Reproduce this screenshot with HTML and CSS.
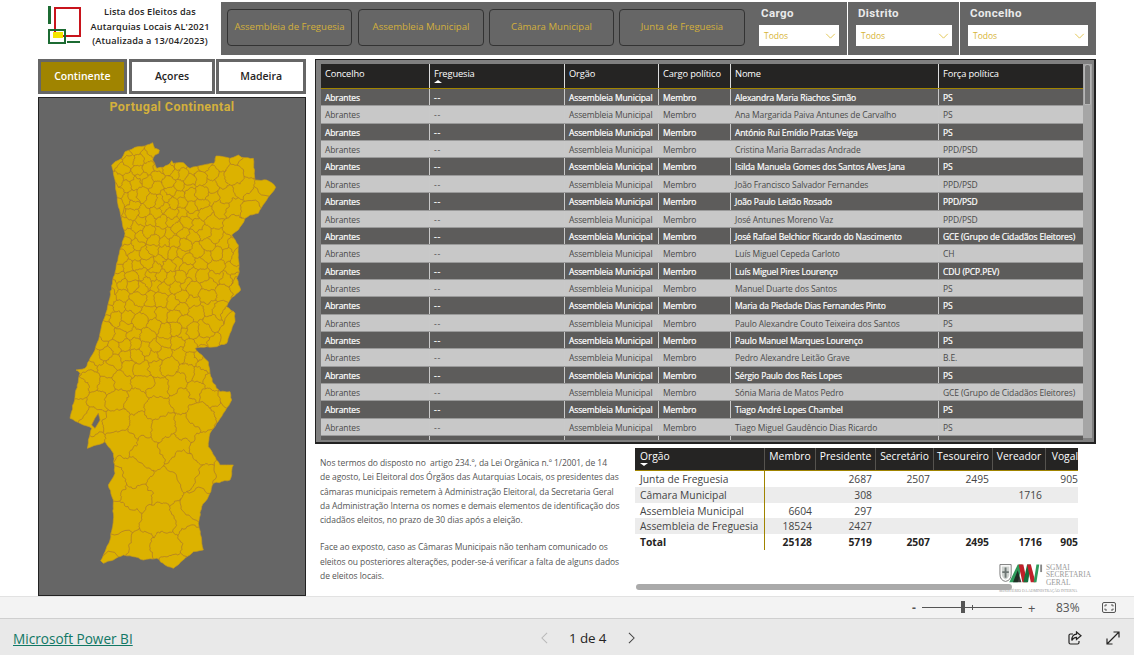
FILE: index.html
```html
<!DOCTYPE html>
<html lang="pt">
<head>
<meta charset="utf-8">
<title>Lista dos Eleitos das Autarquias Locais</title>
<link rel="stylesheet" href="styles.css">
</head>
<body>
<div class="report">
  <header class="top">
    <div class="brand">
      <svg class="brand-logo" viewBox="0 0 34 39" width="34" height="39">
        <rect x="8" y="3" width="25" height="28" fill="#fff" stroke="#c8141c" stroke-width="2"/>
        <rect x="6" y="27" width="10" height="6" fill="#f5e600"/>
        <rect x="1" y="1" width="3" height="18" fill="#1c6b32"/>
        <rect x="2" y="25" width="16" height="13" fill="none" stroke="#1c6b32" stroke-width="2"/>
        <rect x="20" y="36" width="13" height="2" fill="#1c6b32"/>
      </svg>
      <div class="brand-title">Lista dos Eleitos das<br>Autarquias Locais AL'2021<br>(Atualizada a 13/04/2023)</div>
    </div>
    <div class="top-panel buttons-panel">
      <div class="org-btn">Assembleia de Freguesia</div>
      <div class="org-btn">Assembleia Municipal</div>
      <div class="org-btn">Câmara Municipal</div>
      <div class="org-btn">Junta de Freguesia</div>
    </div>
    <div class="top-panel slicer slicer-cargo">
      <div class="slicer-label">Cargo</div>
      <div class="slicer-box"><span>Todos</span><svg viewBox="0 0 12 7" width="11" height="6"><path d="M1 1l5 5 5-5" class="chev"/></svg></div>
    </div>
    <div class="top-panel slicer slicer-distrito">
      <div class="slicer-label">Distrito</div>
      <div class="slicer-box"><span>Todos</span><svg viewBox="0 0 12 7" width="11" height="6"><path d="M1 1l5 5 5-5" class="chev"/></svg></div>
    </div>
    <div class="top-panel slicer slicer-concelho">
      <div class="slicer-label">Concelho</div>
      <div class="slicer-box"><span>Todos</span><svg viewBox="0 0 12 7" width="11" height="6"><path d="M1 1l5 5 5-5" class="chev"/></svg></div>
    </div>
  </header>

  <main class="main">
    <section class="left">
      <div class="tabs">
        <div class="tab tab-a active">Continente</div>
        <div class="tab tab-b">Açores</div>
        <div class="tab tab-a">Madeira</div>
      </div>
      <div class="map-panel">
        <div class="map-title">Portugal Continental</div>
        <svg class="map" id="map" viewBox="0 0 690 1350" width="230" height="450">
          <defs><clipPath id="pt-clip"><polygon id="pt-clip-shape" points=""/></clipPath></defs>
          <polygon id="pt-shape" class="map-land" data-points="155,105 165,95 185,85 195,65 215,58 225,52 255,48 278,38 284,55 298,60 296,70 285,75 278,90 290,115 310,112 330,100 335,92 340,100 370,98 390,115 420,107 430,105 462,100 468,78 490,80 510,85 520,82 535,75 545,82 580,85 585,150 620,150 635,158 647,172 635,190 620,210 605,232 595,250 570,255 555,265 545,285 535,300 515,315 535,345 535,375 538,425 530,445 542,480 510,510 500,530 525,550 525,575 510,610 500,640 470,650 440,650 405,655 445,695 450,730 460,760 480,785 510,785 515,810 490,850 470,880 450,910 445,950 480,1005 520,1005 510,1050 460,1060 445,1100 425,1130 415,1180 425,1230 430,1260 400,1265 370,1290 340,1315 315,1305 290,1285 250,1290 220,1280 190,1275 160,1290 130,1300 122,1292 135,1265 150,1230 160,1170 160,1110 145,1065 165,1030 160,970 135,935 110,945 82,955 85,930 95,895 70,885 30,865 45,800 60,730 48,720 75,715 105,660 120,610 145,520 170,400 195,310 175,230 165,150"/>
          <g id="pt-lines" clip-path="url(#pt-clip)"></g>
          <polygon class="map-water" points="115,850 120,870 105,895 95,885 105,865"/>
        </svg>
      </div>
    </section>

    <section class="right">
      <div class="table-panel">
        <div class="row head">
          <span>Concelho</span>
          <span>Freguesia<i class="sort-up"></i></span>
          <span>Orgão</span>
          <span>Cargo político</span>
          <span>Nome</span>
          <span>Força política</span>
        </div>
        <div class="tbody">
          <div class="row"><span>Abrantes</span><span>--</span><span>Assembleia Municipal</span><span>Membro</span><span>Alexandra Maria Riachos Simão</span><span>PS</span></div>
          <div class="row"><span>Abrantes</span><span>--</span><span>Assembleia Municipal</span><span>Membro</span><span>Ana Margarida Paiva Antunes de Carvalho</span><span>PS</span></div>
          <div class="row"><span>Abrantes</span><span>--</span><span>Assembleia Municipal</span><span>Membro</span><span>António Rui Emídio Pratas Veiga</span><span>PS</span></div>
          <div class="row"><span>Abrantes</span><span>--</span><span>Assembleia Municipal</span><span>Membro</span><span>Cristina Maria Barradas Andrade</span><span>PPD/PSD</span></div>
          <div class="row"><span>Abrantes</span><span>--</span><span>Assembleia Municipal</span><span>Membro</span><span>Isilda Manuela Gomes dos Santos Alves Jana</span><span>PS</span></div>
          <div class="row"><span>Abrantes</span><span>--</span><span>Assembleia Municipal</span><span>Membro</span><span>João Francisco Salvador Fernandes</span><span>PPD/PSD</span></div>
          <div class="row"><span>Abrantes</span><span>--</span><span>Assembleia Municipal</span><span>Membro</span><span>João Paulo Leitão Rosado</span><span>PPD/PSD</span></div>
          <div class="row"><span>Abrantes</span><span>--</span><span>Assembleia Municipal</span><span>Membro</span><span>José Antunes Moreno Vaz</span><span>PPD/PSD</span></div>
          <div class="row"><span>Abrantes</span><span>--</span><span>Assembleia Municipal</span><span>Membro</span><span>José Rafael Belchior Ricardo do Nascimento</span><span>GCE (Grupo de Cidadãos Eleitores)</span></div>
          <div class="row"><span>Abrantes</span><span>--</span><span>Assembleia Municipal</span><span>Membro</span><span>Luís Miguel Cepeda Carloto</span><span>CH</span></div>
          <div class="row"><span>Abrantes</span><span>--</span><span>Assembleia Municipal</span><span>Membro</span><span>Luís Miguel Pires Lourenço</span><span>CDU (PCP.PEV)</span></div>
          <div class="row"><span>Abrantes</span><span>--</span><span>Assembleia Municipal</span><span>Membro</span><span>Manuel Duarte dos Santos</span><span>PS</span></div>
          <div class="row"><span>Abrantes</span><span>--</span><span>Assembleia Municipal</span><span>Membro</span><span>Maria da Piedade Dias Fernandes Pinto</span><span>PS</span></div>
          <div class="row"><span>Abrantes</span><span>--</span><span>Assembleia Municipal</span><span>Membro</span><span>Paulo Alexandre Couto Teixeira dos Santos</span><span>PS</span></div>
          <div class="row"><span>Abrantes</span><span>--</span><span>Assembleia Municipal</span><span>Membro</span><span>Paulo Manuel Marques Lourenço</span><span>PS</span></div>
          <div class="row"><span>Abrantes</span><span>--</span><span>Assembleia Municipal</span><span>Membro</span><span>Pedro Alexandre Leitão Grave</span><span>B.E.</span></div>
          <div class="row"><span>Abrantes</span><span>--</span><span>Assembleia Municipal</span><span>Membro</span><span>Sérgio Paulo dos Reis Lopes</span><span>PS</span></div>
          <div class="row"><span>Abrantes</span><span>--</span><span>Assembleia Municipal</span><span>Membro</span><span>Sónia Maria de Matos Pedro</span><span>GCE (Grupo de Cidadãos Eleitores)</span></div>
          <div class="row"><span>Abrantes</span><span>--</span><span>Assembleia Municipal</span><span>Membro</span><span>Tiago André Lopes Chambel</span><span>PS</span></div>
          <div class="row"><span>Abrantes</span><span>--</span><span>Assembleia Municipal</span><span>Membro</span><span>Tiago Miguel Gaudêncio Dias Ricardo</span><span>PS</span></div>
          <div class="row"><span></span><span></span><span></span><span></span><span></span><span></span></div>
        </div>
        <div class="vscroll"><div class="vthumb"></div></div>
      </div>

      <div class="lower">
        <div class="note">
          <p>Nos termos do disposto no&nbsp; artigo 234.º, da Lei Orgânica n.º 1/2001, de 14<br>de agosto, Lei Eleitoral dos Órgãos das Autarquias Locais, os presidentes das<br>câmaras municipais remetem à Administração Eleitoral, da Secretaria Geral<br>da Administração Interna os nomes e demais elementos de identificação dos<br>cidadãos eleitos, no prazo de 30 dias após a eleição.</p>
          <p>Face ao exposto, caso as Câmaras Municipais não tenham comunicado os<br>eleitos ou posteriores alterações, poder-se-á verificar a falta de alguns dados<br>de eleitos locais.</p>
        </div>
        <div class="matrix-wrap">
          <div class="matrix">
            <div class="mrow mhead"><span>Orgão<i class="sort-down"></i></span><span>Membro</span><span>Presidente</span><span>Secretário</span><span>Tesoureiro</span><span>Vereador</span><span>Vogal</span></div>
            <div class="mrow"><span>Junta de Freguesia</span><span></span><span>2687</span><span>2507</span><span>2495</span><span></span><span>905</span></div>
            <div class="mrow alt"><span>Câmara Municipal</span><span></span><span>308</span><span></span><span></span><span>1716</span><span></span></div>
            <div class="mrow"><span>Assembleia Municipal</span><span>6604</span><span>297</span><span></span><span></span><span></span><span></span></div>
            <div class="mrow alt"><span>Assembleia de Freguesia</span><span>18524</span><span>2427</span><span></span><span></span><span></span><span></span></div>
            <div class="mrow total"><span>Total</span><span>25128</span><span>5719</span><span>2507</span><span>2495</span><span>1716</span><span>905</span></div>
          </div>
          <div class="sg-logo">
            <div class="sg-top">
              <svg viewBox="0 0 47 20" width="47" height="20">
                <path d="M1 1h12v10q0 7-6 8Q1 18 1 11z" fill="#fff" stroke="#777" stroke-width="1"/>
                <path d="M3 3h8v8q0 4-4 6Q3 15 3 11z" fill="#cfd3d0"/>
                <path d="M6 4h2v11H6zM3.500 8h7v2h-7z" fill="#6f7775"/>
                <path d="M11 20L20 1h5l-5 19z" fill="#2e9a5b"/>
                <path d="M15 20L20 7l4 13z" fill="#1b1b1b" opacity=".85"/>
                <path d="M21 1h5l4 19h-5z" fill="#c0202a"/>
                <path d="M26 20L30 1h4l-3 19z" fill="#14713d"/>
                <path d="M30 1h4l5 19h-5z" fill="#c0202a"/>
                <path d="M37 20l3-19h3l-3 19z" fill="#2e9a5b"/>
                <path d="M44 1h2v8h-2z" fill="#888"/>
              </svg>
              <div class="sg-name">SGMAI<br>SECRETARIA<br>GERAL</div>
            </div>
            <div class="sg-min">MINISTÉRIO DA ADMINISTRAÇÃO INTERNA</div>
          </div>
          <div class="hscroll"></div>
        </div>
      </div>
    </section>
  </main>
</div>

<div class="zoombar">
  <span class="zoom-minus">-</span>
  <div class="zoom-slider"><i class="zoom-tick"></i><i class="zoom-handle"></i></div>
  <span class="zoom-plus">+</span>
  <span class="zoom-value">83%</span>
  <svg class="zoom-fit" viewBox="0 0 14 11" width="14" height="11"><rect x=".5" y=".5" width="13" height="10" rx="1.500" class="icon-thin"/><path d="M3 4.500V3h2M9 3h2v1.500M11 6.500V8H9M5 8H3V6.500" class="icon-thin"/></svg>
</div>

<footer class="footer">
  <a class="pbi-link" href="#">Microsoft Power BI</a>
  <nav class="pager">
    <svg viewBox="0 0 8 14" width="7" height="12"><path d="M7 1L1 7l6 6" class="pager-off"/></svg>
    <span class="pager-text">1 de 4</span>
    <svg viewBox="0 0 8 14" width="7" height="12"><path d="M1 1l6 6-6 6" class="pager-on"/></svg>
  </nav>
  <div class="foot-icons">
    <svg viewBox="0 0 14 14" width="14" height="14"><path d="M5 3H2.500A1.500 1.500 0 0 0 1 4.500v7A1.500 1.500 0 0 0 2.500 13h7a1.500 1.500 0 0 0 1.500-1.500V10" class="icon-foot"/><path d="M8.500 1L13 4.800 8.500 8.500V6.300C6.200 6.300 4.700 7.500 3.800 9.500 3.800 6 5.600 3.400 8.500 3.200z" class="icon-foot"/></svg>
    <svg viewBox="0 0 14 14" width="14" height="14"><path d="M1 13L13 1M7.500 1H13v5.500M1 7.500V13h5.500" class="icon-foot"/></svg>
  </div>
</footer>
<script src="map.js"></script>
</body>
</html>
```
FILE: styles.css
```css
* { box-sizing: border-box; }
html, body { margin: 0; padding: 0; }
body {
  width: 1134px;
  height: 655px;
  overflow: hidden;
  background: #fff;
  font-family: "Open Sans", "Noto Sans", sans-serif;
  color: #333;
}
.report { height: 596px; overflow: hidden; }

/* top */
.top { display: flex; height: 59px; padding-top: 2px; }
.brand { width: 221px; display: flex; align-items: flex-start; padding: 3px 0 0 47px; }
.brand-logo { flex: none; }
.brand-title {
  width: 138px;
  text-align: center;
  font-size: 9.2px;
  line-height: 14.5px;
  font-weight: 600;
  color: #252423;
  letter-spacing: .15px;
}
.top-panel { background: #666; height: 53px; }
.buttons-panel { width: 530px; display: flex; gap: 5px; padding: 7px 0 0 6px; }
.org-btn {
  width: 125px;
  height: 37px;
  padding-bottom: 2px;
  border: 1.5px solid #333;
  border-radius: 4px;
  color: #d3b03c;
  font-size: 9.6px;
  display: flex;
  align-items: center;
  justify-content: center;
  white-space: nowrap;
}
.org-btn:first-child { margin-right: 1px; }
.org-btn:nth-child(even) { width: 126px; }
.slicer { margin-right: 1px; padding-top: 4px; }
.slicer-cargo { width: 96px; padding-left: 8px; }
.slicer-distrito { width: 111px; padding-left: 8px; }
.slicer-concelho { width: 136px; margin-right: 0; padding-left: 8px; }
.slicer-label {
  font-family: Roboto, sans-serif;
  font-weight: 700;
  font-size: 11.5px;
  line-height: 14px;
  letter-spacing: .4px;
  color: #eaeaea;
  padding-left: 2px;
}
.slicer-box {
  height: 21px;
  margin-top: 5px;
  background: #fff;
  display: flex;
  align-items: center;
  justify-content: space-between;
  padding: 0 1px 0 5px;
  font-size: 8.5px;
  color: #d7b437;
}
.slicer-box svg { margin-right: 2px; }
.slicer-cargo .slicer-box { width: 80px; }
.slicer-distrito .slicer-box { width: 96px; }
.slicer-concelho .slicer-box { width: 120px; }
.chev { fill: none; stroke: #e0c040; stroke-width: 1; }

/* main */
.main { display: flex; padding-left: 38px; gap: 9px; }
.left { width: 268px; flex: none; }
.right { width: 781px; flex: none; }
.tabs { display: flex; gap: 1px; height: 35px; }
.tab {
  border: 3px solid #666;
  background: #fff;
  display: flex;
  align-items: center;
  justify-content: center;
  padding-bottom: 2px;
  font-size: 10.5px;
  font-weight: 600;
  color: #252423;
}
.tab-a { width: 90px; }
.tab-b { width: 87px; }
.tab-a:first-child { width: 89px; margin-right: 1px; }
.tab.active { background: #a08400; color: #fff; }
.map-panel {
  height: 499px;
  margin-top: 3px;
  background: #666;
  border: 1px solid #222;
  padding-left: 21px;
}
.map-title {
  margin-left: -21px;
  height: 18px;
  text-align: center;
  font-family: Roboto, sans-serif;
  font-weight: 700;
  font-size: 12.5px;
  line-height: 17px;
  letter-spacing: .45px;
  color: #d3b03c;
}
.map { display: block; margin-top: 14px; }
.map-land { fill: #dcb200; stroke: #c79a1a; stroke-width: 2; stroke-linejoin: round; }
.map-water { fill: #666; stroke: #b8842c; stroke-width: 2; }
#pt-lines path { fill: none; stroke: #b07c2a; stroke-width: 2.3; stroke-linejoin: round; }

/* table */
.table-panel {
  position: relative;
  width: 781px;
  height: 385px;
  background: #808080;
  border: 1px solid #222;
  border-bottom-width: 2px;
  border-right-width: 2px;
  padding: 4px 0 0 5px;
}
.row {
  display: grid;
  grid-template-columns: 109px 135px 94px 72px 208px 144px;
  width: 762px;
  height: 17.37px;
  font-size: 8.5px;
  line-height: 16px;
  letter-spacing: -.12px;
}
.row span {
  padding: 1px 0 0 4px;
  border-right: 1px solid #c9c9c9;
  overflow: hidden;
  white-space: nowrap;
}
.row span:last-child { border-right: 0; }
.head {
  height: 25px;
  background: #252423;
  color: #fff;
  border-bottom: 1px solid #a08400;
  font-size: 9.3px;
  line-height: 12px;
  padding: 0;
}
.row.head span { padding-top: 4px; border-right-color: #ddd; }
.tbody { height: 351px; overflow: hidden; }
.tbody .row { border-bottom: 1px solid #9a9a9a; }
.tbody .row:nth-child(odd) { background: #5d5c5b; color: #fff; -webkit-text-stroke: .2px #fff; }
.tbody .row:nth-child(even) { background: #c8c8c8; color: #4a4a4a; }
.tbody .row span:nth-child(2) { letter-spacing: .8px; }
.sort-up, .sort-down { display: block; width: 0; height: 0; border-left: 4px solid transparent; border-right: 4px solid transparent; }
.sort-up { border-bottom: 3px solid #fff; }
.sort-down { border-top: 3px solid #fff; margin-top: -1px; }
.vscroll {
  position: absolute;
  right: 2px;
  top: 4px;
  bottom: 4px;
  width: 9px;
  background: #a6a6a6;
  padding: 0 1px;
}
.vthumb { height: 41px; background: #777; border: 1px solid #b5b5b5; border-radius: 3px 3px 0 0; }

/* lower */
.lower { display: flex; }
.note { width: 320px; padding: 12px 0 0 5px; font-size: 8.5px; line-height: 14.3px; color: #555; letter-spacing: -.06px; white-space: nowrap; flex: none; }
.note p { margin: 0 0 13px; }
.matrix-wrap { position: relative; width: 460px; padding-top: 4px; height: 152px; }
.matrix { width: 443px; }
.mrow {
  display: grid;
  grid-template-columns: 130px 51px 60px 58px 59px 53px 32px;
  height: 15.8px;
  font-size: 10.3px;
  line-height: 16px;
  color: #444;
}
.mrow span { text-align: right; padding-right: 4px; white-space: nowrap; overflow: hidden; }
.mrow span:first-child { text-align: left; padding-left: 5px; padding-right: 0; border-right: 1px solid #a08400; }
.mrow span:last-child { padding-right: 0; }
.alt { background: #ececec; }
.total { font-weight: 700; color: #252423; }
.mhead { height: 23px; background: #252423; color: #fff; border-bottom: 1px solid #a08400; line-height: 15px; }
.mhead span { text-align: center; padding: 1px 0 0; border-right: 1px solid #55534f; }
.mhead span:first-child { border-right-color: #55534f; }
.mhead span:last-child { border-right: 0; text-align: right; }
.sg-logo { margin: 13px 0 0 364px; width: 92px; }
.sg-top { display: flex; gap: 3px; }
.sg-name { font-family: "Liberation Serif", serif; font-size: 7.4px; line-height: 7.4px; color: #9a9a9a; padding-top: 1px; white-space: nowrap; }
.sg-min { font-family: "Liberation Serif", serif; font-size: 3.8px; line-height: 6px; margin-top: 2px; color: #999; white-space: nowrap; }
.hscroll { position: absolute; left: 1px; top: 140px; width: 376px; height: 6px; border-radius: 3px; background: #aaa; }

/* zoom bar */
.zoombar {
  height: 22px;
  background: #f3f3f3;
  border-top: 1px solid #e2e2e2;
  display: flex;
  align-items: center;
  padding-left: 912px;
  font-size: 12px;
  color: #555;
}
.zoom-minus { width: 10px; font-weight: 700; }
.zoom-slider { position: relative; width: 100px; height: 1px; background: #555; }
.zoom-tick { position: absolute; left: 50px; top: -2px; width: 1px; height: 5px; background: #555; }
.zoom-handle { position: absolute; left: 39px; top: -6px; width: 4px; height: 12px; background: #555; }
.zoom-plus { width: 20px; margin-left: 6px; font-size: 13px; }
.zoom-value { width: 46px; margin-left: 8px; }
.zoom-fit { flex: none; }
.icon-thin { fill: none; stroke: #555; stroke-width: 1; }

/* footer */
.footer {
  height: 37px;
  background: #e9e9e9;
  border-top: 1px solid #cfcfcf;
  display: flex;
  align-items: center;
  padding: 2px 0 0 13px;
}
.pbi-link { width: 528px; font-size: 13.6px; color: #117865; text-decoration: underline; }
.pager { width: 527px; display: flex; align-items: center; font-size: 13.4px; color: #252423; }
.pager-text { width: 38px; margin: 0 21px; letter-spacing: -.1px; font-weight: 500; white-space: nowrap; }
.pager-off { fill: none; stroke: #b9b9b9; stroke-width: 1.2; }
.pager-on { fill: none; stroke: #444; stroke-width: 1.2; }
.foot-icons { display: flex; gap: 24px; }
.icon-foot { fill: none; stroke: #252423; stroke-width: 1.2; }
```
FILE: map.js
```js
(function () {
  var seed = 20210926;
  function rnd() {
    seed = (seed + 0x6D2B79F5) | 0;
    var t = Math.imul(seed ^ (seed >>> 15), 1 | seed);
    t = (t + Math.imul(t ^ (t >>> 7), 61 | t)) ^ t;
    return ((t ^ (t >>> 14)) >>> 0) / 4294967296;
  }
  var land = document.getElementById('pt-shape');
  var raw = land.getAttribute('data-points').split(' ').map(function (p) {
    return p.split(',').map(Number);
  });

  // Rough up the coast
  var outline = [];
  raw.forEach(function (a, i) {
    var b = raw[(i + 1) % raw.length];
    var n = Math.max(1, Math.round(Math.hypot(b[0] - a[0], b[1] - a[1]) / 9));
    for (var k = 0; k < n; k++) {
      var f = k / n;
      var j = k ? 1.6 : 0;
      outline.push([a[0] + (b[0] - a[0]) * f + (rnd() - .5) * 2 * j, a[1] + (b[1] - a[1]) * f + (rnd() - .5) * 2 * j]);
    }
  });
  var pts = outline.map(function (p) { return p[0].toFixed(1) + ',' + p[1].toFixed(1); }).join(' ');
  land.setAttribute('points', pts);
  document.getElementById('pt-clip-shape').setAttribute('points', pts);

  function inside(x, y) {
    var c = false;
    for (var i = 0, j = raw.length - 1; i < raw.length; j = i++) {
      var a = raw[i], b = raw[j];
      if ((a[1] > y) !== (b[1] > y) && x < (b[0] - a[0]) * (y - a[1]) / (b[1] - a[1]) + a[0]) c = !c;
    }
    return c;
  }
  function radius(x, y) {
    if (y < 320 && x > 460) return 40;
    if (y < 650) return 23 + (x > 400 ? 5 : 0) + (y > 480 ? 5 : 0);
    if (y < 950) return 26 + (y - 650) * 0.13;
    return 66;
  }

  // Municipal seats, spaced more loosely towards the south
  var seats = [];
  for (var t = 0; t < 20000; t++) {
    var x = 20 + rnd() * 640, y = 30 + rnd() * 1290;
    if (!inside(x, y)) continue;
    var r = radius(x, y), ok = true;
    for (var s = 0; s < seats.length; s++) {
      if (Math.hypot(seats[s][0] - x, seats[s][1] - y) < r) { ok = false; break; }
    }
    if (ok) seats.push([x, y]);
  }

  function clip(poly, a, b, c) {
    var out = [];
    for (var i = 0; i < poly.length; i++) {
      var p = poly[i], q = poly[(i + 1) % poly.length];
      var dp = a * p[0] + b * p[1] - c, dq = a * q[0] + b * q[1] - c;
      if (dp <= 0) out.push(p);
      if ((dp < 0 && dq > 0) || (dp > 0 && dq < 0)) {
        var f = dp / (dp - dq);
        out.push([p[0] + (q[0] - p[0]) * f, p[1] + (q[1] - p[1]) * f]);
      }
    }
    return out;
  }
  function wiggle(a, b, depth, out) {
    if (depth === 0) { out.push(b); return; }
    var dx = b[0] - a[0], dy = b[1] - a[1], amp = (rnd() - .5) * .5;
    var m = [(a[0] + b[0]) / 2 - dy * amp, (a[1] + b[1]) / 2 + dx * amp];
    wiggle(a, m, depth - 1, out);
    wiggle(m, b, depth - 1, out);
  }

  var seen = {}, d = [];
  seats.forEach(function (s, i) {
    var cell = [[-20, -20], [710, -20], [710, 1370], [-20, 1370]];
    seats.forEach(function (o, j) {
      if (i === j || cell.length === 0) return;
      var a = o[0] - s[0], b = o[1] - s[1];
      cell = clip(cell, a, b, (o[0] * o[0] + o[1] * o[1] - s[0] * s[0] - s[1] * s[1]) / 2);
    });
    cell.forEach(function (p, k) {
      var q = cell[(k + 1) % cell.length];
      var ka = p[0].toFixed(1) + ',' + p[1].toFixed(1), kb = q[0].toFixed(1) + ',' + q[1].toFixed(1);
      if (ka === kb) return;
      var key = ka < kb ? ka + '|' + kb : kb + '|' + ka;
      if (seen[key]) return;
      seen[key] = 1;
      var line = [p], len = Math.hypot(q[0] - p[0], q[1] - p[1]);
      wiggle(p, q, len > 40 ? 4 : len > 14 ? 3 : 1, line);
      d.push('M' + line.map(function (c) { return c[0].toFixed(1) + ' ' + c[1].toFixed(1); }).join('L'));
    });
  });
  var path = document.createElementNS('http://www.w3.org/2000/svg', 'path');
  path.setAttribute('d', d.join(''));
  document.getElementById('pt-lines').appendChild(path);
})();
```
